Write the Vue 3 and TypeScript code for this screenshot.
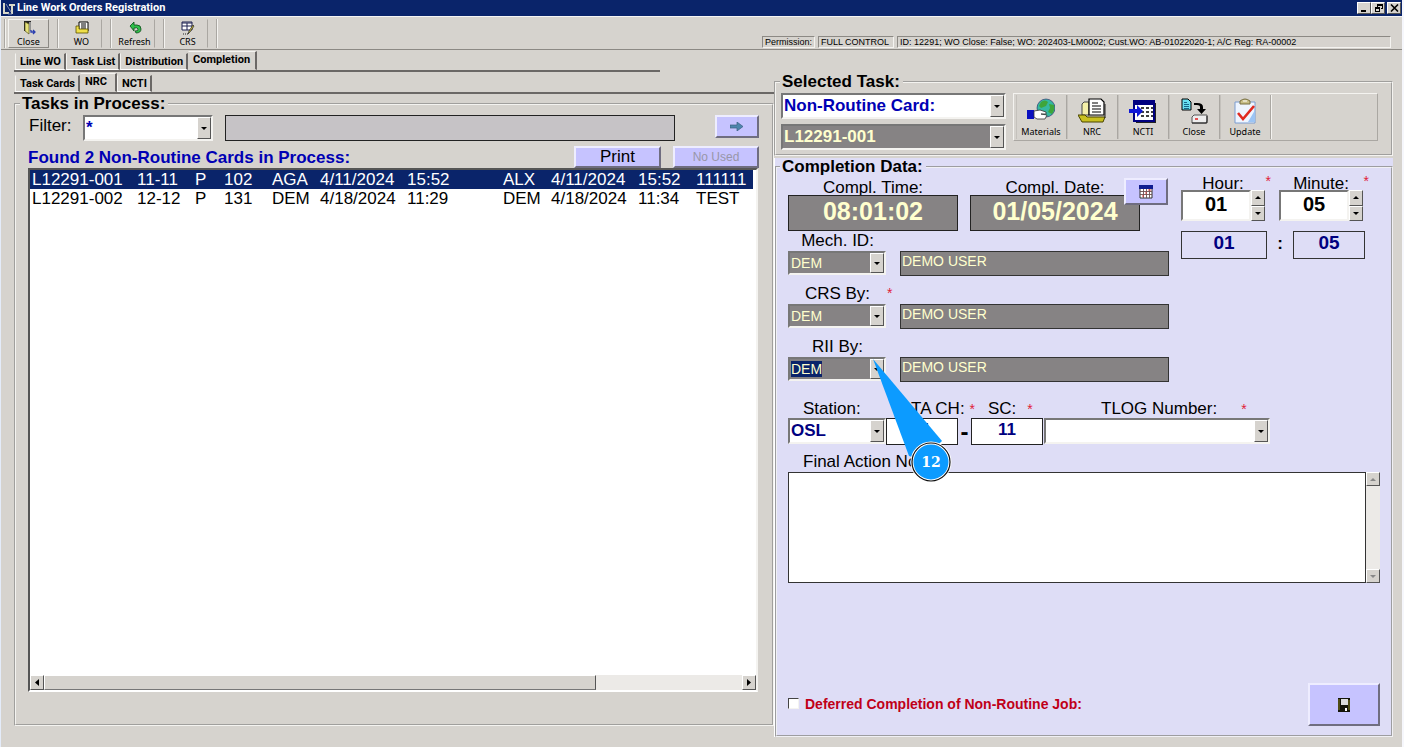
<script setup lang="ts">
import { ref } from 'vue'

interface Card {
  no: string
  code: string
  kind: string
  item: string
  openBy: string
  openDate: string
  openTime: string
  doneBy: string
  doneDate: string
  doneTime: string
  note: string
}

const cards: Card[] = [
  { no: 'L12291-001', code: '11-11', kind: 'P', item: '102', openBy: 'AGA', openDate: '4/11/2024', openTime: '15:52', doneBy: 'ALX', doneDate: '4/11/2024', doneTime: '15:52', note: '111111' },
  { no: 'L12291-002', code: '12-12', kind: 'P', item: '131', openBy: 'DEM', openDate: '4/18/2024', openTime: '11:29', doneBy: 'DEM', doneDate: '4/18/2024', doneTime: '11:34', note: 'TEST' },
]
const columns: (keyof Card)[] = ['no', 'code', 'kind', 'item', 'openBy', 'openDate', 'openTime', 'doneBy', 'doneDate', 'doneTime', 'note']
const selected = ref(0)

const mainTabs = ['Line WO', 'Task List', 'Distribution', 'Completion']
const subTabs = ['Task Cards', 'NRC', 'NCTI']
const mainTab = ref('Completion')
const subTab = ref('NRC')

const people = [
  { id: 'mech', label: 'Mech. ID:', required: false, picked: false },
  { id: 'crs', label: 'CRS By:', required: true, picked: false },
  { id: 'rii', label: 'RII By:', required: false, picked: true },
]

const hour = ref(1)
const minute = ref(5)
const two = (n: number) => String(n).padStart(2, '0')
const step = (n: number, d: number, max: number) => (n + d + max) % max
const deferred = ref(false)
const notes = ref('')
</script>

<template>
  <div class="window">
    <header class="titlebar">
      <svg class="logo" viewBox="0 0 14 13" width="14" height="13">
        <path d="M2 1v10h5M7 3h6M10 3v9" fill="none" stroke="#d8d8c8" stroke-width="2" />
        <path d="M4 2l5 8M6 12h4" stroke="#7c8ab0" fill="none" />
      </svg>
      <h1>Line Work Orders Registration</h1>
      <div class="winbtns">
        <button type="button" aria-label="Minimize"><svg viewBox="0 0 9 8" width="9" height="8"><path d="M1 6h5v2H1z" /></svg></button>
        <button type="button" aria-label="Restore"><svg viewBox="0 0 9 8" width="9" height="8"><path d="M3 0h6v5H7V4h1V2H4v1H3zM1 3h5v5H1zM2 5v2h3V5z" fill-rule="evenodd" /></svg></button>
        <button type="button" class="x" aria-label="Close window"><svg viewBox="0 0 9 8" width="9" height="8"><path d="M1 0.500l7 7M8 0.500l-7 7" stroke="#000" stroke-width="1.600" /></svg></button>
      </div>
    </header>

    <div class="toolbar">
      <div class="tool raised">
        <button type="button">
          <svg viewBox="0 0 14 14" width="14" height="14">
            <path d="M2 0h7v10H2z" fill="#222" /><path d="M3 1l4 2v10L3 10z" fill="#e6e27a" stroke="#55521a" stroke-width=".7" />
            <path d="M8 1v9" stroke="#fff" /><path d="M9 9v2h4M11 9l2 2-2 2" fill="none" stroke="#2b3fb0" stroke-width="1.300" />
          </svg>
          Close
        </button>
      </div>
      <div class="tool">
        <button type="button">
          <svg viewBox="0 0 14 14" width="14" height="14">
            <path d="M4 1h9v9H4z" fill="#fff" stroke="#000" /><path d="M6 3h5M6 5h5M6 7h5" stroke="#000" />
            <path d="M1 5h3v3h9v4H1z" fill="#efe04a" stroke="#5a5200" stroke-width=".8" />
          </svg>
          WO
        </button>
      </div>
      <div class="tool">
        <button type="button">
          <svg viewBox="0 0 14 14" width="14" height="14">
            <path d="M2 5l4-4v3h3q4 0 4 4t-5 4l-1-2q4 0 3-2t-3-1H6v3z" fill="#2fbf4a" stroke="#0a4a18" stroke-width=".8" />
          </svg>
          Refresh
        </button>
      </div>
      <div class="tool">
        <button type="button">
          <svg viewBox="0 0 14 14" width="14" height="14">
            <path d="M1 1h10v8H1z" fill="#fff" stroke="#1c2050" /><path d="M1 2h10M1 5h10M6 2v7" stroke="#1c2050" />
            <path d="M13 5l-4 6-2 2 1-3 4-6z" fill="#d8c840" stroke="#222" stroke-width=".7" /><path d="M2 13h5" stroke="#222" stroke-dasharray="1 1" />
          </svg>
          CRS
        </button>
      </div>
      <div class="tool end"></div>
      <div class="status">
        <span>Permission:</span>
        <span class="ctl">FULL CONTROL</span>
        <span class="info">ID: 12291; WO Close: False; WO: 202403-LM0002; Cust.WO: AB-01022020-1; A/C Reg: RA-00002</span>
      </div>
    </div>

    <main class="columns">
      <section class="left">
        <nav class="tabs main-tabs">
          <button v-for="t in mainTabs" :key="t" type="button" :class="{ on: t === mainTab }" @click="mainTab = t">{{ t }}</button>
        </nav>
        <nav class="tabs sub-tabs">
          <button v-for="t in subTabs" :key="t" type="button" :class="{ on: t === subTab }" @click="subTab = t">{{ t }}</button>
        </nav>

        <fieldset class="tasks">
          <legend>Tasks in Process:</legend>
          <div class="tasks-body">
            <div class="filter">
              <label for="filter">Filter:</label>
              <span class="combo filter-combo"><select id="filter"><option>*</option></select><span class="drop"></span></span>
              <input class="filter-text" type="text" aria-label="Filter value" />
              <button type="button" class="btn go" aria-label="Apply filter">
                <svg viewBox="0 0 14 9" width="14" height="9"><path d="M0 3h7V0l6 4.500L7 9V6H0z" fill="#4d86ad" stroke="#3a5f80" stroke-width=".7" /></svg>
              </button>
            </div>
            <div class="found">
              <strong>Found 2 Non-Routine Cards in Process:</strong>
              <button type="button" class="btn print">Print</button>
              <button type="button" class="btn unused" disabled>No Used</button>
            </div>
            <div class="list">
              <div class="rows">
                <table>
                  <tbody>
                    <tr v-for="(c, i) in cards" :key="c.no" :class="{ sel: i === selected }" @click="selected = i">
                      <td v-for="k in columns" :key="k" :class="k">{{ c[k] }}</td>
                    </tr>
                  </tbody>
                </table>
              </div>
              <div class="hscroll">
                <button type="button" aria-label="Scroll left"><svg viewBox="0 0 4 7" width="4" height="7"><path d="M4 0v7L0 3.500z" /></svg></button>
                <div class="thumb"></div>
                <div class="track"></div>
                <button type="button" aria-label="Scroll right"><svg viewBox="0 0 4 7" width="4" height="7"><path d="M0 0v7l4-3.500z" /></svg></button>
              </div>
            </div>
          </div>
        </fieldset>
      </section>

      <section class="right">
        <fieldset class="task">
          <legend>Selected Task:</legend>
          <div class="task-body">
            <div class="task-picks">
              <span class="combo big"><select aria-label="Card type"><option>Non-Routine Card:</option></select><span class="drop"></span></span>
              <span class="combo big dark"><select aria-label="Card number"><option>L12291-001</option></select><span class="drop"></span></span>
            </div>
            <div class="task-tools">
              <button type="button">
                <svg viewBox="0 0 28 26" width="28" height="26">
                  <circle cx="19" cy="10" r="9" fill="#35b8a0" stroke="#226" stroke-width=".6" />
                  <path d="M14 4q4-3 7 0l-2 4-5 2-2-2zM22 6l5 1q1 5-2 9l-4-2 2-4z" fill="#3fa53a" />
                  <path d="M0 12h7v9H0z" fill="#0a10c0" /><path d="M7 13l6-1 6 2v2h-5l6 1-2 4H10l-3-2z" fill="#fff" stroke="#333" stroke-width=".8" />
                </svg>
                Materials
              </button>
              <button type="button">
                <svg viewBox="0 0 28 26" width="28" height="26">
                  <path d="M4 17V6l2-2h5v13z" fill="#f5f0a8" stroke="#444" />
                  <path d="M11 1h12l3 3v13H11z" fill="#fff" stroke="#000" stroke-width="1.200" /><path d="M14 5h6M14 8h9M14 11h9M14 14h9" stroke="#000" stroke-width="1.200" />
                  <path d="M0 17h7l2 2h18l-2 5H4z" fill="#c8c020" stroke="#4a4500" /><path d="M27 6v14" stroke="#222" />
                </svg>
                NRC
              </button>
              <button type="button">
                <svg viewBox="0 0 28 26" width="28" height="26">
                  <path d="M7 5h20v20H7z" fill="#222" /><path d="M5 3h20v20H5z" fill="#fff" stroke="#000080" stroke-width="2" /><path d="M4 2h22v5H4z" fill="#000080" />
                  <path d="M12 10h3M17 10h3M22 10h2M12 14h3M17 14h3M22 14h2M12 18h3M17 18h3M22 18h2" stroke="#000" stroke-width="1.600" />
                  <path d="M0 11h8V7l6 6-6 6v-4H0z" fill="#1018d8" />
                </svg>
                NCTI
              </button>
              <button type="button">
                <svg viewBox="0 0 28 26" width="28" height="26">
                  <path d="M2 1h6l3 3v8H2z" fill="#68e0f0" stroke="#000" /><path d="M4 4.500h3M4 6.500h5M4 8.500h5M4 10.500h5" stroke="#004870" stroke-width=".8" />
                  <path d="M14 5h3q6 0 6 4v2h3l-4.500 5-4.500-5h3V9q0-2-3-2h-3z" fill="#000" />
                  <path d="M12 19l2-2h13v6l-1 2H12z" fill="#eee" stroke="#555" /><path d="M12 25h15v-7" fill="none" stroke="#222" /><path d="M15 21h3" stroke="#e02020" stroke-width="1.500" />
                </svg>
                Close
              </button>
              <button type="button">
                <svg viewBox="0 0 28 26" width="28" height="26">
                  <path d="M4 4h20v21H4z" fill="#eef5ff" stroke="#7a9cd0" /><path d="M17 24h7V12z" fill="#9cc4f4" />
                  <path d="M9 6V3q5-4 10 0v3z" fill="#c8bf88" stroke="#776e40" /><path d="M12 3h4" stroke="#fff" />
                  <path d="M7 15l5 6L23 8" fill="none" stroke="#e02a20" stroke-width="2.600" />
                </svg>
                Update
              </button>
            </div>
          </div>
        </fieldset>

        <div class="panel">
          <fieldset class="completion">
            <legend>Completion Data:</legend>
            <div class="completion-body">
              <div class="upper">
                <div class="form">
                  <div class="stamps">
                    <div class="stamp">
                      <label for="ctime">Compl. Time:</label>
                      <input id="ctime" type="text" value="08:01:02" readonly />
                    </div>
                    <div class="stamp">
                      <label for="cdate">Compl. Date:</label>
                      <input id="cdate" type="text" value="01/05/2024" readonly />
                      <button type="button" class="btn cal" aria-label="Choose date">
                        <svg viewBox="0 0 14 14" width="14" height="14">
                          <path d="M1 1h12v12H1z" fill="#fff" stroke="#333" /><path d="M0 0h14v4H0z" fill="#101c90" />
                          <path d="M1 6.500h12M1 9.500h12M4.500 4v9M7.500 4v9M10.500 4v9" stroke="#705050" stroke-width=".9" /><path d="M6 8h2M9 5h3M3 11h2" stroke="#e04040" />
                        </svg>
                      </button>
                    </div>
                  </div>
                  <div v-for="p in people" :key="p.id" class="person">
                    <div class="caption"><label :for="p.id">{{ p.label }}</label><span v-if="p.required" class="star">*</span></div>
                    <div class="pair">
                      <span class="combo dark small" :class="{ picked: p.picked }"><select :id="p.id"><option>DEM</option></select><span class="drop"></span></span>
                      <input class="name" type="text" value="DEMO USER" readonly :aria-label="p.label + ' name'" />
                    </div>
                  </div>
                </div>

                <div class="clock">
                  <div class="spins">
                    <div class="spin">
                      <label for="hour">Hour:</label><span class="star">*</span>
                      <div class="spinbox">
                        <input id="hour" type="text" :value="two(hour)" />
                        <div class="arrows">
                          <button type="button" aria-label="Hour up" @click="hour = step(hour, 1, 24)"><i class="up"></i></button>
                          <button type="button" aria-label="Hour down" @click="hour = step(hour, -1, 24)"><i class="down"></i></button>
                        </div>
                      </div>
                    </div>
                    <div class="spin">
                      <label for="minute">Minute:</label><span class="star">*</span>
                      <div class="spinbox">
                        <input id="minute" type="text" :value="two(minute)" />
                        <div class="arrows">
                          <button type="button" aria-label="Minute up" @click="minute = step(minute, 1, 60)"><i class="up"></i></button>
                          <button type="button" aria-label="Minute down" @click="minute = step(minute, -1, 60)"><i class="down"></i></button>
                        </div>
                      </div>
                    </div>
                  </div>
                  <div class="totals">
                    <output class="hh">{{ two(hour) }}</output><b>:</b><output class="mm">{{ two(minute) }}</output>
                  </div>
                </div>

                <div class="callout">
                  <svg viewBox="0 0 80 124" width="80" height="124">
                    <path d="M1 1L70 83 50 102 37 98z" fill="#0c9bff" />
                    <circle cx="59" cy="104" r="19" fill="#0c9bff" stroke="#fff" stroke-width="3" />
                    <circle cx="59" cy="104" r="19" fill="none" stroke="#111" stroke-width="1.200" />
                  </svg>
                  <span>12</span>
                </div>
              </div>

              <div class="codes">
                <div class="code station">
                  <label for="station">Station:</label>
                  <span class="combo"><select id="station"><option>OSL</option></select><span class="drop"></span></span>
                </div>
                <div class="code ata">
                  <label for="ata">ATA CH:<span class="star">*</span></label>
                  <input id="ata" type="text" value="11" />
                </div>
                <b class="dash">-</b>
                <div class="code sc">
                  <label for="sc">SC:<span class="star">*</span></label>
                  <input id="sc" type="text" value="11" />
                </div>
                <div class="code tlog">
                  <label for="tlog">TLOG Number:<span class="star">*</span></label>
                  <span class="combo"><select id="tlog"><option></option></select><span class="drop"></span></span>
                </div>
              </div>

              <label class="notes-label" for="notes">Final Action Notes:</label>
              <div class="notes">
                <textarea id="notes" v-model="notes"></textarea>
                <div class="vscroll">
                  <button type="button" aria-label="Scroll up"><i class="up"></i></button>
                  <div></div>
                  <button type="button" aria-label="Scroll down"><i class="down"></i></button>
                </div>
              </div>

              <div class="foot">
                <label><input v-model="deferred" type="checkbox" />Deferred Completion of Non-Routine Job:</label>
                <button type="button" class="btn save" aria-label="Save">
                  <svg viewBox="0 0 12 14" width="12" height="14">
                    <path d="M0 0h12v14H0z" fill="#15150a" /><path d="M1 1v11M11 2v10" stroke="#8a8420" /><path d="M3 1h7v6H3z" fill="#dcdcdc" /><path d="M7 10h2v3H7z" fill="#fff" />
                  </svg>
                </button>
              </div>
            </div>
          </fieldset>
        </div>
      </section>
    </main>
  </div>
</template>

<style>
body {
  margin: 0;
  background: #d6d3ce;
}
</style>

<style scoped>
* {
  box-sizing: border-box;
}
.window {
  min-height: 100vh;
  display: flex;
  flex-direction: column;
  background: #d6d3ce;
  border-left: 1px solid #e4ecfa;
  border-right: 2px solid #f6f7fc;
  font: 17px/18px "Liberation Sans", Arial, sans-serif;
  color: #000;
}
button, input, select, textarea {
  font: inherit;
  color: inherit;
  margin: 0;
  padding: 0;
  border-radius: 0;
}
button {
  display: flex;
  align-items: center;
  justify-content: center;
}
input, textarea, select {
  min-width: 0;
  outline: none;
}
fieldset {
  min-width: 0;
  margin: 0;
  padding: 0;
  border: 2px groove #f4f3f0;
}
legend {
  margin-left: 4px;
  padding: 0 3px 0 2px;
  font-weight: bold;
}
.titlebar {
  display: flex;
  align-items: center;
  height: 16px;
  padding: 0 1px;
  background: #0a246a;
  color: #fff;
}
.titlebar h1 {
  flex: 1;
  margin: 0 0 0 1px;
  font: bold 11px/14px Roboto, sans-serif;
}
.winbtns {
  display: flex;
}
.winbtns button, .hscroll button, .vscroll button, .arrows button {
  background: #d6d3ce;
  border: 1px solid;
  border-color: #fff #555 #555 #fff;
}
.winbtns button {
  width: 14px;
  height: 12px;
}
.winbtns .x {
  margin-left: 2px;
}
.toolbar {
  display: flex;
  height: 34px;
  padding: 2px 0 0 3px;
  border-top: 1px solid #f4f4f4;
  border-bottom: 1px solid #8c8984;
}
.tool {
  flex: none;
  width: 53px;
  height: 29px;
  padding-left: 3px;
  border-left: 1px solid #aaa7a2;
  box-shadow: inset 1px 0 #f4f3f0;
}
.tool button {
  flex-direction: column;
  gap: 1px;
  width: 41px;
  height: 29px;
  background: none;
  border: 1px solid;
  border-color: transparent #aaa7a2 transparent transparent;
  font: 9px/11px "Noto Sans", sans-serif;
}
.tool.raised button {
  border-color: #f4f3f0 #8c8984 #8c8984 #f4f3f0;
}
.tool.end {
  width: 6px;
}
.status {
  display: flex;
  gap: 3px;
  width: 45%;
  height: 12px;
  margin: 17px 11px 0 auto;
  font: 9px/11px "Liberation Sans", Arial, sans-serif;
  white-space: nowrap;
}
.status span {
  padding: 0 2px;
  border: 1px solid;
  border-color: #8c8984 #f4f3f0 #f4f3f0 #8c8984;
}
.status .ctl {
  padding-right: 4px;
}
.status .info {
  flex: 1;
  overflow: hidden;
}
.columns {
  flex: 1;
  display: grid;
  grid-template-columns: 760fr 619fr;
  padding: 0 9px 0 13px;
}
.left, .right {
  display: flex;
  flex-direction: column;
  min-width: 0;
}
.left {
  padding-bottom: 21px;
}
.right {
  padding: 23px 0 10px;
}
.tabs {
  display: flex;
  align-items: flex-end;
  height: 22px;
  padding-left: 1px;
  border-bottom: 2px solid #6b6866;
}
.main-tabs {
  width: 85%;
}
.tabs button {
  height: 17px;
  padding: 0 3px 0 4px;
  background: none;
  border: solid;
  border-width: 1px 2px 1px 1px;
  border-color: transparent #6b6866 #fff #f4f3f0;
  font: bold 11px/14px Roboto, sans-serif;
}
.tabs .on {
  height: 19px;
  padding: 0 5px 2px 4px;
  border-color: #f4f3f0 #6b6866 transparent transparent;
}
.sub-tabs .on {
  padding-right: 8px;
}
.tasks {
  flex: 1;
  display: flex;
  flex-direction: column;
  margin-top: 1px;
}
.tasks-body {
  flex: 1;
  display: flex;
  flex-direction: column;
  height: 100%;
  padding: 2px 13px 32px 12px;
}
.filter, .found {
  display: flex;
}
.filter label {
  width: 55px;
  padding: 2px 0 0 1px;
}
.filter-combo {
  width: 130px;
}
.filter-text {
  flex: 1;
  height: 26px;
  margin: 0 40px 0 12px;
  background: #c6c3c6;
  border: 1px solid #222;
}
.btn {
  background: #c6c3ff;
  border: 2px solid;
  border-color: #eeedff #6f6d80 #6f6d80 #eeedff;
}
.go {
  width: 44px;
  height: 23px;
}
.found {
  gap: 12px;
  padding-top: 5px;
}
.found strong {
  flex: 1;
  padding: 3px 0 0;
  color: #0000b4;
}
.print {
  width: 87px;
  height: 22px;
}
.unused {
  width: 86px;
  height: 22px;
  color: #9896a8;
  font-size: 12px;
}
.combo {
  position: relative;
  display: flex;
  height: 26px;
  background: #fff;
  border: 2px solid;
  border-color: #777 #f4f3f0 #f4f3f0 #777;
  color: #0000b4;
  font-weight: bold;
}
.combo select {
  flex: 1;
  appearance: none;
  padding: 0 15px 0 1px;
  background: transparent;
  border: 0;
}
.drop {
  position: absolute;
  top: 0;
  right: 0;
  bottom: 0;
  display: flex;
  align-items: center;
  justify-content: center;
  width: 14px;
  background: #d6d3ce;
  border: 1px solid;
  border-color: #fff #555 #555 #fff;
  pointer-events: none;
}
.drop::after, .down {
  content: "";
  border: 3px solid transparent;
  border-top-color: #000;
  border-bottom: 0;
}
.up {
  border: 3px solid transparent;
  border-bottom-color: #000;
  border-top: 0;
}
.combo.dark {
  background: #868384;
  color: #ffffce;
}
.combo.small {
  width: 98px;
  height: 24px;
  font-size: 14px;
  font-weight: normal;
}
.combo.picked select {
  background: linear-gradient(#0a246a, #0a246a) 1px 2px / 31px 16px no-repeat;
}
.list {
  flex: 1;
  display: flex;
  flex-direction: column;
  background: #fff;
  border: 2px solid;
  border-color: #555 #f4f3f0 #fff #555;
  margin-right: 1px;
}
.rows {
  flex: 1;
  overflow: hidden;
  padding-right: 3px;
}
table {
  width: 100%;
  table-layout: fixed;
  border-collapse: collapse;
}
tr {
  height: 19px;
}
.sel {
  background: #0a246a;
  color: #fff;
}
td {
  padding: 0 0 0 2px;
  line-height: 19px;
  white-space: nowrap;
}
td.no { width: 105px; }
td.code { width: 58px; }
td.kind { width: 29px; }
td.item { width: 48px; }
td.openBy, td.doneBy { width: 48px; }
td.openDate, td.doneDate { width: 87px; }
td.openTime { width: 96px; }
td.doneTime { width: 58px; }
.hscroll {
  display: flex;
  height: 15px;
  background: #eceae7;
}
.hscroll button {
  width: 14px;
}
.thumb {
  width: 76%;
  background: #d6d3ce;
  border: 1px solid;
  border-color: #fff #555 #777 #fff;
}
.track {
  flex: 1;
}
.task-body {
  display: flex;
  gap: 7px;
  padding: 2px 13px 4px 5px;
}
.task-picks {
  display: flex;
  flex-direction: column;
  gap: 5px;
  width: 225px;
}
.big {
  height: 26px;
}
.task-tools {
  flex: 1;
  display: flex;
  height: 48px;
  padding: 1px 0 1px 2px;
  border: 1px solid;
  border-color: #f4f3f0 #aaa7a2 #aaa7a2 #f4f3f0;
}
.task-tools button {
  flex-direction: column;
  gap: 2px;
  width: 51px;
  background: none;
  border: 0;
  border-right: 1px solid #aaa7a2;
  box-shadow: 1px 0 #f4f3f0, inset 1px 0 #c4c1bc;
  font: 9px/11px "Noto Sans", sans-serif;
}
.panel {
  flex: 1;
  display: flex;
  margin-top: 2px;
  background: #deddf6;
  border-left: 1px solid #fff;
}
.completion {
  flex: 1;
  border-color: #f0f0f4;
}
.completion legend {
  margin-left: 3px;
}
.completion-body {
  display: flex;
  flex-direction: column;
  height: 100%;
  padding: 0 11px 9px 11px;
}
.upper {
  position: relative;
  display: flex;
  gap: 12px;
}
.form {
  display: flex;
  flex-direction: column;
  gap: 9px;
  width: 381px;
  padding-top: 3px;
}
.stamps {
  display: flex;
  gap: 12px;
  margin-bottom: -8px;
}
.stamp {
  position: relative;
  width: 170px;
}
.stamp label, .spin label {
  display: block;
  height: 16px;
  text-align: center;
}
.stamp input {
  position: relative;
  display: block;
  width: 100%;
  height: 36px;
  padding-bottom: 4px;
  background: #868384;
  border: 1px solid #222;
  color: #ffffce;
  font: bold 25px/30px "Liberation Sans", Arial, sans-serif;
  text-align: center;
}
.cal {
  position: absolute;
  top: -1px;
  right: -28px;
  width: 44px;
  height: 27px;
}
.caption {
  display: flex;
  height: 19px;
}
.caption label {
  width: 99px;
  text-align: center;
}
.star {
  color: #e02038;
  font-size: 14px;
  line-height: 16px;
}
.pair {
  display: flex;
  gap: 14px;
}
.name {
  flex: 1;
  height: 25px;
  padding: 0 1px 5px;
  background: #868384;
  border: 1px solid #333;
  color: #ffffce;
  font-size: 14px;
}
.spins {
  display: flex;
  gap: 14px;
}
.spin {
  position: relative;
  width: 84px;
}
.spin label {
  height: 14px;
  line-height: 16px;
}
.spin .star {
  position: absolute;
  top: -3px;
  right: -6px;
}
.spinbox {
  position: relative;
  display: flex;
}
.spinbox input {
  flex: 1;
  height: 31px;
  padding-bottom: 2px;
  background: #fff;
  border: 2px solid;
  border-color: #777 #f4f3f0 #f4f3f0 #777;
  font: bold 20px/24px "Liberation Sans", Arial, sans-serif;
  text-align: center;
}
.arrows {
  display: grid;
  width: 14px;
}
.totals {
  display: flex;
  justify-content: space-between;
  margin-top: 10px;
  width: 184px;
}
.totals b {
  padding-top: 4px;
}
.totals output {
  height: 28px;
  border: 1px solid #333;
  color: #000080;
  font: bold 19px/22px "Liberation Sans", Arial, sans-serif;
  text-align: center;
}
.hh {
  width: 86px;
}
.mm {
  width: 72px;
}
.callout {
  position: absolute;
  z-index: 2;
  top: 182px;
  left: 84px;
  width: 80px;
  height: 124px;
  pointer-events: none;
}
.callout span {
  position: absolute;
  top: 95px;
  left: 39px;
  width: 40px;
  color: #fff;
  font: bold 14px/18px "DejaVu Serif", serif;
  text-align: center;
}
.codes {
  display: flex;
  margin-top: 18px;
}
.code.station { width: 98px; }
.code.ata, .code.sc { width: 72px; }
.code.tlog { width: 226px; margin-left: 1px; }
.codes label {
  display: block;
  height: 18px;
  white-space: nowrap;
}
.station label { padding-left: 15px; }
.ata label { padding-left: 15px; }
.sc label { padding-left: 17px; }
.tlog label { padding-left: 57px; }
.ata .star { margin-left: 5px; }
.sc .star { margin-left: 11px; }
.tlog .star { margin-left: 24px; }
.code input {
  display: block;
  width: 100%;
  height: 27px;
  padding-bottom: 3px;
  background: #fff;
  border: 1px solid #222;
  color: #000080;
  font-weight: bold;
  text-align: center;
}
.code .combo {
  color: #000080;
}
.dash {
  width: 13px;
  padding-top: 20px;
  font-size: 24px;
  line-height: 24px;
  text-align: center;
}
.notes-label {
  display: block;
  padding: 8px 0 1px 15px;
}
.notes {
  display: flex;
}
.notes textarea {
  flex: 1;
  height: 111px;
  resize: none;
  background: #fff;
  border: 1px solid #333;
}
.vscroll {
  display: flex;
  flex-direction: column;
  width: 14px;
  background: #eceae7;
}
.vscroll div {
  flex: 1;
}
.vscroll button {
  height: 14px;
}
.vscroll .up {
  border-bottom-color: #888;
}
.vscroll .down {
  border-top-color: #888;
}
.foot {
  display: flex;
  align-items: center;
  justify-content: space-between;
  margin-top: auto;
}
.foot label {
  display: flex;
  align-items: center;
  gap: 6px;
  padding-bottom: 2px;
  color: #c00018;
  font-size: 14px;
  font-weight: bold;
}
.foot input {
  appearance: none;
  width: 11px;
  height: 11px;
  background: #fff;
  border: 1px solid;
  border-color: #444 #f4f3f0 #f4f3f0 #444;
}
.foot input:checked {
  background: #333;
}
.save {
  width: 72px;
  height: 43px;
}
</style>
